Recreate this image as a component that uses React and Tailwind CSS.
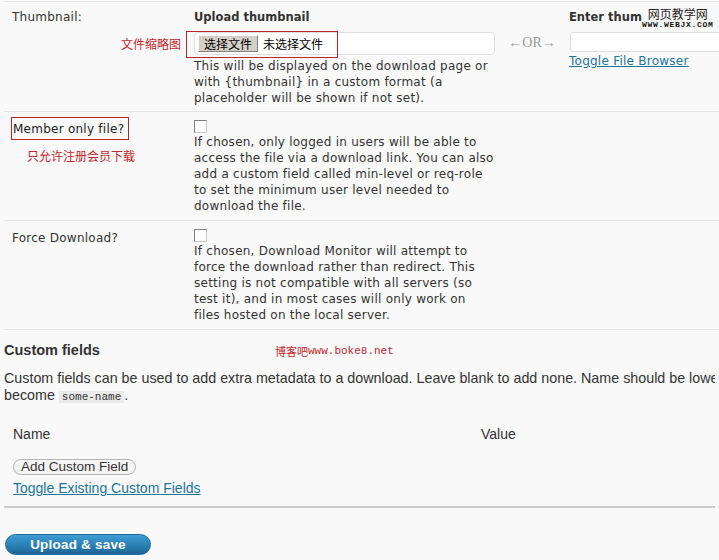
import React from 'react';

function Checkbox() {
    return <div className="w-[13px] h-[13px] bg-white border border-[#7f7f7f] border-b-[#c8c8c8] border-r-[#c8c8c8]" />;
}

function Desc({ lines }) {
    return (
        <div className="text-[12px] leading-4 tracking-[0.25px] text-[#333] whitespace-nowrap">
            {lines.map((l, i) => (
                <div key={i}>{l}</div>
            ))}
        </div>
    );
}

export default function App() {
    return (
        <div className="w-[719px] h-[560px] overflow-hidden bg-[#f9f9f9] text-[#333] font-['DejaVu_Sans',Verdana,sans-serif]">
            <div className="pt-[1px] ml-[4px]">
                {/* Thumbnail row */}
                <div className="flex h-[111px] border-t border-b border-[#e4e4e4]">
                    <div className="w-[190px] shrink-0 pl-[8px] pr-[13px] pt-[7px]">
                        <div className="text-[12px] leading-4 tracking-[0.25px]">Thumbnail:</div>
                        <div className="mt-[11px] text-right text-[12px] leading-4 text-[#c3272b] font-['Noto_Sans_CJK_SC',sans-serif]">文件缩略图</div>
                    </div>
                    <div className="w-[301px] shrink-0 pt-[7px]">
                        <div className="text-[11.5px] leading-4 font-bold">Upload thumbnail</div>
                        <div className="relative mt-[7px] h-[23px] bg-white border border-[#dfdfdf] rounded-[4px] flex items-center pl-[3px]">
                            <div className="h-[17px] px-[5px] flex items-center bg-[#d4d0c8] border border-t-white border-l-white border-b-[#808080] border-r-[#808080] text-[12px] text-black font-['Noto_Sans_CJK_SC',sans-serif] leading-none">选择文件</div>
                            <div className="ml-[5px] text-[12px] text-black font-['Noto_Sans_CJK_SC',sans-serif] leading-none">未选择文件</div>
                            <div className="absolute left-[-9px] top-[-2px] w-[152px] h-[27px] border border-[#b8252b]" />
                        </div>
                        <div className="mt-[3px]">
                            <Desc lines={['This will be displayed on the download page or', 'with {thumbnail} in a custom format (a', 'placeholder will be shown if not set).']} />
                        </div>
                    </div>
                    <div className="w-[74px] shrink-0 pt-[33px] text-center text-[14px] leading-4 text-[#9a9a9a] font-['Liberation_Serif',serif]">←OR→</div>
                    <div className="flex-1 pt-[7px] overflow-hidden">
                        <div className="relative">
                            <div className="text-[11.5px] leading-4 font-bold whitespace-nowrap">Enter thum</div>
                            {/* watermark */}
                            <div className="absolute left-[73px] top-[-2px] flex flex-col items-center bg-[#f9f9f9]">
                                <div className="text-[12px] leading-[14px] text-[#222] font-['Noto_Sans_CJK_SC',sans-serif] whitespace-nowrap">网页教学网</div>
                                <div className="text-[8px] leading-[8px] font-bold tracking-[0.7px] text-[#111] font-['Liberation_Mono',monospace] whitespace-nowrap">WWW.WEBJX.COM</div>
                            </div>
                        </div>
                        <div className="mt-[7px] ml-[1px] h-[20px] w-[160px] bg-white border border-[#dfdfdf] rounded-[3px]" />
                        <div className="mt-[1px] text-[12px] leading-4 tracking-[0.25px] text-[#21759b] underline whitespace-nowrap">Toggle File Browser</div>
                    </div>
                </div>

                {/* Member only row */}
                <div className="flex h-[109px] border-b border-[#e4e4e4]">
                    <div className="w-[190px] shrink-0 pl-[7px] pt-[5px]">
                        <div className="w-[118px] h-[23px] border border-[#b8252b] pl-[1px] flex items-center text-[12px] tracking-[0.25px] text-[#222]">Member only file?</div>
                        <div className="mt-[8px] ml-[16px] text-[12px] leading-4 text-[#c3272b] font-['Noto_Sans_CJK_SC',sans-serif]">只允许注册会员下载</div>
                    </div>
                    <div className="pt-[8px]">
                        <Checkbox />
                        <div className="mt-[1px]">
                            <Desc lines={['If chosen, only logged in users will be able to', 'access the file via a download link. You can also', 'add a custom field called min-level or req-role', 'to set the minimum user level needed to', 'download the file.']} />
                        </div>
                    </div>
                </div>

                {/* Force download row */}
                <div className="flex h-[109px] border-b border-[#e4e4e4]">
                    <div className="w-[190px] shrink-0 pl-[8px] pt-[9px]">
                        <div className="text-[12px] leading-4 tracking-[0.25px]">Force Download?</div>
                    </div>
                    <div className="pt-[8px]">
                        <Checkbox />
                        <div className="mt-[1px]">
                            <Desc lines={['If chosen, Download Monitor will attempt to', 'force the download rather than redirect. This', 'setting is not compatible with all servers (so', 'test it), and in most cases will only work on', 'files hosted on the local server.']} />
                        </div>
                    </div>
                </div>
            </div>

            {/* Custom fields */}
            <div className="px-[4px] font-['Liberation_Sans',Arial,sans-serif] text-[#333]">
                <div className="mt-[10px] flex items-center">
                    <div className="w-[271px] text-[14.5px] leading-5 font-bold">Custom fields</div>
                    <div className="mt-[3px] flex items-center text-[#c3272b]">
                        <span className="text-[11px] font-['Noto_Sans_CJK_SC',sans-serif]">博客吧</span>
                        <span className="text-[11px] font-['Liberation_Mono',monospace]">www.boke8.net</span>
                    </div>
                </div>
                <div className="mt-[10px] text-[14.3px] leading-[17px] whitespace-nowrap overflow-hidden">
                    Custom fields can be used to add extra metadata to a download. Leave blank to add none. Name should be lower case with no spaces
                    <br />
                    become <code className="px-[3px] bg-[#eaeaea] text-[11px] font-['Liberation_Mono',monospace]">some-name</code>.
                </div>
                <div className="mt-[18px] flex text-[14px] leading-5">
                    <div className="w-[477px] pl-[9px]">Name</div>
                    <div>Value</div>
                </div>
                <div className="mt-[10px] pl-[9px]">
                    <button className="h-[16px] px-[7px] rounded-full border border-[#b5b5b5] bg-[#f4f4f4] text-[13.5px] leading-[14px] text-[#333]">Add Custom Field</button>
                </div>
                <div className="mt-0 pl-[9px] text-[14px] leading-5 text-[#21759b] underline">Toggle Existing Custom Fields</div>
                <div className="mt-[8px] h-[2px] bg-[#cccccc]" />
                <div className="mt-[24px] pl-[1px]">
                    <button className="w-[146px] h-[21px] rounded-full border border-[#1d6a98] bg-gradient-to-b from-[#3d9ed6] to-[#1c6796] text-white text-[13.5px] font-bold leading-none tracking-[0.2px]">Upload &amp; save</button>
                </div>
            </div>
        </div>
    );
}
